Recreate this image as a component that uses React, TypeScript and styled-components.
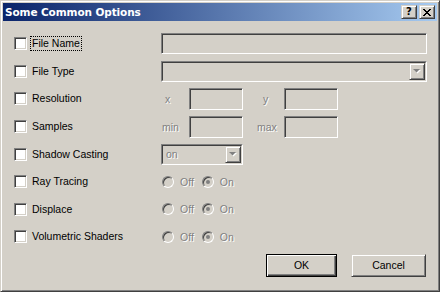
import * as React from 'react';
import styled, { createGlobalStyle, css } from 'styled-components';

const GlobalStyle = createGlobalStyle`
  html, body {
    margin: 0;
    padding: 0;
    background: #d4d0c8;
  }
  body {
    font-family: "Liberation Sans", Arial, sans-serif;
    font-size: 10.5px;
    color: #000;
  }
`;

const raised = css`
  border: 1px solid;
  border-color: #d4d0c8 #404040 #404040 #d4d0c8;
  box-shadow: inset 1px 1px #fff, inset -1px -1px #808080;
`;

const sunken = css`
  border: 1px solid;
  border-color: #808080 #fff #fff #808080;
  box-shadow: inset 1px 1px #404040, inset -1px -1px #d4d0c8;
`;

const disabledText = css`
  color: #808080;
  text-shadow: 1px 1px 0 #fff;
`;

const Window = styled.div`
  width: 440px;
  height: 292px;
  box-sizing: border-box;
  ${raised};
  padding: 2px;
  background: #d4d0c8;
  display: flex;
  flex-direction: column;
`;

const TitleBar = styled.div`
  height: 18px;
  display: flex;
  align-items: center;
  padding: 0 2px;
  background: linear-gradient(to right, #0a246a, #a6caf0);
`;

const TitleText = styled.div`
  flex: 1;
  font-family: "DejaVu Sans", Verdana, sans-serif;
  font-weight: bold;
  font-size: 10.5px;
  color: #fff;
  letter-spacing: -0.1px;
`;

const CaptionButton = styled.div`
  width: 16px;
  height: 14px;
  box-sizing: border-box;
  ${raised};
  background: #d4d0c8;
  display: flex;
  align-items: center;
  justify-content: center;
  font-family: "DejaVu Sans", Verdana, sans-serif;
  font-weight: bold;
  font-size: 10px;
  line-height: 1;
  & + & {
    margin-left: 2px;
  }
`;

const Body = styled.div`
  flex: 1;
  padding: 9px 10px 0 11px;
  display: flex;
  flex-direction: column;
`;

const Form = styled.div`
  display: grid;
  grid-template-columns: 147px 1fr;
  grid-auto-rows: 27.6px;
  align-items: center;
`;

const CheckRow = styled.div`
  display: flex;
  align-items: center;
  gap: 5px;
`;

const CheckBox = styled.span`
  width: 13px;
  height: 13px;
  box-sizing: border-box;
  ${sunken};
  background: #fff;
`;

const CheckLabel = styled.span<{ $focused?: boolean }>`
  line-height: 13px;
  ${({ $focused }) =>
    $focused &&
    css`
      outline: 1px dotted #000;
      padding: 0 1px;
      margin-left: -1px;
    `}
`;

const TextField = styled.div<{ $width?: number }>`
  box-sizing: border-box;
  height: ${({ $width }) => ($width ? 22 : 21)}px;
  width: ${({ $width }) => ($width ? `${$width}px` : '100%')};
  ${sunken};
  background: #d4d0c8;
`;

const ComboOuter = styled.div<{ $width?: number }>`
  box-sizing: border-box;
  height: 21px;
  width: ${({ $width }) => ($width ? `${$width}px` : '100%')};
  border: 1px solid;
  border-color: #808080 #fff #fff #808080;
  display: flex;
`;

const ComboInner = styled.div`
  flex: 1;
  display: flex;
  align-items: stretch;
  border: 1px solid;
  border-color: #404040 #d4d0c8 #d4d0c8 #404040;
  background: #d4d0c8;
`;

const ComboText = styled.div`
  flex: 1;
  display: flex;
  align-items: center;
  padding-left: 3px;
  ${disabledText};
`;

const ArrowButton = styled.div`
  width: 16px;
  box-sizing: border-box;
  ${raised};
  display: flex;
  align-items: center;
  justify-content: center;
`;

const PairRow = styled.div`
  display: grid;
  grid-template-columns: 28px 54px 41px 54px;
  align-items: center;
`;

const FieldLabel = styled.span<{ $indent: number }>`
  padding-left: ${({ $indent }) => $indent}px;
  ${disabledText};
`;

const RadioGroup = styled.div`
  display: flex;
  align-items: center;
  padding-left: 1px;
`;

const RadioOption = styled.label`
  display: flex;
  align-items: center;
  gap: 6px;
  margin-right: 8px;
  ${disabledText};
`;

const Radio = styled.span<{ $checked?: boolean }>`
  position: relative;
  width: 12px;
  height: 12px;
  box-sizing: border-box;
  border-radius: 50%;
  ${sunken};
  background: #d4d0c8;
  ${({ $checked }) =>
    $checked &&
    css`
      &::after {
        content: '';
        position: absolute;
        left: 3px;
        top: 3px;
        width: 4px;
        height: 4px;
        border-radius: 50%;
        background: #808080;
      }
    `}
`;

const Footer = styled.div`
  margin-top: 3px;
  display: flex;
  justify-content: flex-end;
  gap: 14px;
  padding-right: 1px;
`;

const PushButton = styled.div<{ $width: number; $default?: boolean }>`
  width: ${({ $width }) => $width}px;
  height: 23px;
  box-sizing: border-box;
  display: flex;
  align-items: center;
  justify-content: center;
  background: #d4d0c8;
  ${({ $default }) =>
    $default
      ? css`
          border: 1px solid #000;
          box-shadow: inset 1px 1px #fff, inset -1px -1px #404040,
            inset -2px -2px #808080;
        `
      : raised}
`;

const ComboArrow = () => (
  <svg width="8" height="5" viewBox="0 0 8 5">
    <polygon points="1,1 8,1 4.5,4.5" fill="#fff" />
    <polygon points="0,0 7,0 3.5,3.5" fill="#808080" />
  </svg>
);

const CloseGlyph = () => (
  <svg width="8" height="7" viewBox="0 0 8 7" shapeRendering="crispEdges">
    <path
      d="M0 0h2v1h-2zM6 0h2v1h-2zM1 1h2v1h-2zM5 1h2v1h-2zM2 2h4v1h-4zM3 3h2v1h-2zM2 4h4v1h-4zM1 5h2v1h-2zM5 5h2v1h-2zM0 6h2v1h-2zM6 6h2v1h-2z"
      fill="#000"
    />
  </svg>
);

const Combo: React.FC<{ width?: number; value?: string }> = ({ width, value }) => (
  <ComboOuter $width={width}>
    <ComboInner>
      <ComboText>{value}</ComboText>
      <ArrowButton>
        <ComboArrow />
      </ArrowButton>
    </ComboInner>
  </ComboOuter>
);

const Option: React.FC<{ label: string; focused?: boolean }> = ({ label, focused }) => (
  <CheckRow>
    <CheckBox />
    <CheckLabel $focused={focused}>{label}</CheckLabel>
  </CheckRow>
);

const OnOff = () => (
  <RadioGroup>
    <RadioOption>
      <Radio />
      Off
    </RadioOption>
    <RadioOption>
      <Radio $checked />
      On
    </RadioOption>
  </RadioGroup>
);

export default function App() {
  return (
    <>
      <GlobalStyle />
      <Window>
        <TitleBar>
          <TitleText>Some Common Options</TitleText>
          <CaptionButton>?</CaptionButton>
          <CaptionButton>
            <CloseGlyph />
          </CaptionButton>
        </TitleBar>
        <Body>
          <Form>
            <Option label="File Name" focused />
            <TextField />

            <Option label="File Type" />
            <Combo />

            <Option label="Resolution" />
            <PairRow>
              <FieldLabel $indent={4}>x</FieldLabel>
              <TextField $width={54} />
              <FieldLabel $indent={20}>y</FieldLabel>
              <TextField $width={54} />
            </PairRow>

            <Option label="Samples" />
            <PairRow>
              <FieldLabel $indent={1}>min</FieldLabel>
              <TextField $width={54} />
              <FieldLabel $indent={14}>max</FieldLabel>
              <TextField $width={54} />
            </PairRow>

            <Option label="Shadow Casting" />
            <Combo width={82} value="on" />

            <Option label="Ray Tracing" />
            <OnOff />

            <Option label="Displace" />
            <OnOff />

            <Option label="Volumetric Shaders" />
            <OnOff />
          </Form>
          <Footer>
            <PushButton $width={71} $default>
              OK
            </PushButton>
            <PushButton $width={75}>Cancel</PushButton>
          </Footer>
        </Body>
      </Window>
    </>
  );
}
